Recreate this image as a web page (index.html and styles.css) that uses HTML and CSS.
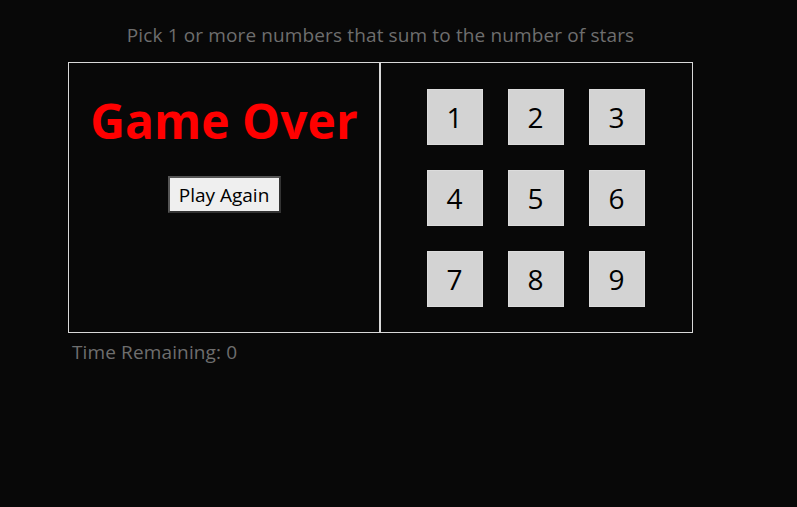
FILE: index.html
```html
<!DOCTYPE html>
<html>
<head>
<meta charset="utf-8">
<link rel="stylesheet" href="styles.css">
<title>Star Match</title>
</head>
<body>
<div class="game">
  <div class="help">Pick 1 or more numbers that sum to the number of stars</div>
  <div class="body">
    <div class="left">
      <div class="game-done">
        <div class="message">Game Over</div>
        <button class="play-again">Play Again</button>
      </div>
    </div>
    <div class="right">
      <div class="numbers">
        <button class="number">1</button>
        <button class="number">2</button>
        <button class="number">3</button>
        <button class="number">4</button>
        <button class="number">5</button>
        <button class="number">6</button>
        <button class="number">7</button>
        <button class="number">8</button>
        <button class="number">9</button>
      </div>
    </div>
  </div>
  <div class="timer">Time Remaining: 0</div>
</div>
</body>
</html>
```

FILE: styles.css
```css
html, body {
  margin: 0;
  padding: 0;
  background: #080808;
  height: 100%;
}
body {
  font-family: "Open Sans", "Noto Sans", sans-serif;
}
.game {
  width: 625px;
  padding: 22px 0 0 68px;
}
.help {
  color: #6e6e6e;
  font-size: 19px;
  letter-spacing: 0.13px;
  line-height: 26px;
  text-align: center;
  margin-bottom: 14px;
}
.body {
  display: flex;
}
.left, .right {
  border: 1px solid #d8d8d8;
  box-sizing: border-box;
  height: 271px;
}
.left {
  width: 312px;
}
.right {
  width: 313px;
  display: flex;
  align-items: center;
  justify-content: center;
  padding-right: 2px;
}
.game-done {
  display: flex;
  flex-direction: column;
  align-items: center;
  padding-top: 26px;
}
.message {
  color: #ff0000;
  font-weight: bold;
  font-size: 48px;
  line-height: 64px;
}
.play-again {
  margin-top: 23px;
  width: 113px;
  height: 37px;
  padding: 0;
  font-family: inherit;
  font-size: 19px;
  color: #000;
  background: #efefef;
  border: 2px solid;
  border-color: #555 #333 #333 #555;
}
.numbers {
  display: grid;
  grid-template-columns: repeat(3, 56px);
  grid-auto-rows: 56px;
  column-gap: 25px;
  row-gap: 25px;
}
.number {
  padding: 0;
  border: 1px solid #dcdcdc;
  background: #d3d3d3;
  color: #000;
  font-family: inherit;
  font-size: 28px;
}
.timer {
  color: #6e6e6e;
  font-size: 19px;
  letter-spacing: 0.13px;
  line-height: 26px;
  padding: 6px 0 0 4px;
}
```
